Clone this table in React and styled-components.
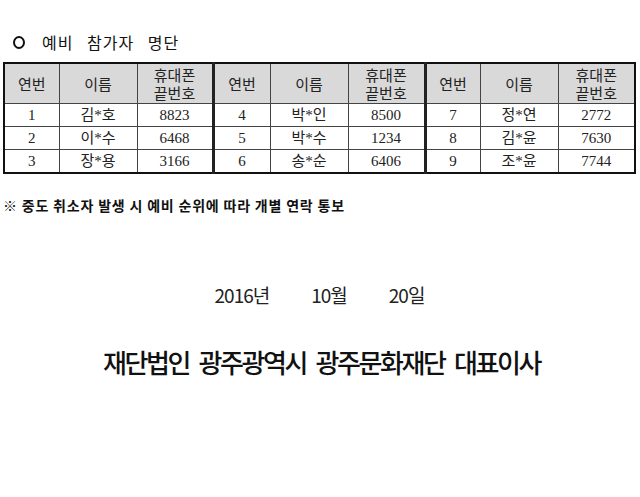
import React from "react";
import styled, { createGlobalStyle } from "styled-components";

const GlobalStyle = createGlobalStyle`
  html, body {
    margin: 0;
    padding: 0;
    background: #ffffff;
  }
  body {
    font-family: "Noto Sans CJK KR", "Noto Sans", sans-serif;
    color: #111;
  }
`;

const Page = styled.div`
  width: 640px;
  height: 497px;
  box-sizing: border-box;
  padding: 32px 6px 0 3px;
  display: flex;
  flex-direction: column;
`;

const Heading = styled.div`
  display: flex;
  align-items: center;
  height: 20px;
  padding-left: 10px;
  font-size: 16px;
  line-height: 20px;
  letter-spacing: 1px;
  word-spacing: 9px;
  color: #111;
`;

const Circle = styled.span`
  display: inline-block;
  width: 8px;
  height: 9px;
  border: 2px solid #111;
  border-radius: 50%;
  margin-right: 17px;
`;

const Table = styled.table`
  margin-top: 10px;
  width: 631px;
  border-collapse: collapse;
  table-layout: fixed;
  border: 2px solid #111;
  font-family: "Liberation Serif", "Noto Sans CJK KR", serif;
  font-size: 15px;
  color: #222;
`;

const Cell = styled.td`
  border: 1px solid #444;
  border-left: ${(p) => (p.$group ? "3px solid #222" : "1px solid #444")};
  text-align: center;
  padding: 0;
  height: 22px;
  line-height: 18px;
`;

const HeadCell = styled(Cell).attrs({ as: "th" })`
  background: #d9d9d9;
  font-weight: normal;
  font-family: "Noto Sans CJK KR", sans-serif;
  height: 39px;
  line-height: 18px;
`;

const Note = styled.div`
  margin-top: 21px;
  font-size: 14px;
  font-weight: 700;
  letter-spacing: 0.8px;
  color: #111;
`;

const DateLine = styled.div`
  margin-top: 66px;
  display: flex;
  justify-content: center;
  gap: 42px;
  font-family: "Liberation Sans Narrow", "Noto Sans CJK KR", sans-serif;
  font-size: 19px;
  letter-spacing: -1px;
  color: #222;
  padding-left: 2px;
`;

const Signer = styled.div`
  margin-top: 35px;
  text-align: center;
  font-size: 26px;
  font-weight: 500;
  letter-spacing: -2.4px;
  word-spacing: 6px;
  color: #111;
  padding-left: 6px;
`;

const widths = [55, 78, 76, 57, 78, 77, 55, 78, 77];

const rows = [
  ["1", "김*호", "8823", "4", "박*인", "8500", "7", "정*연", "2772"],
  ["2", "이*수", "6468", "5", "박*수", "1234", "8", "김*윤", "7630"],
  ["3", "장*용", "3166", "6", "송*순", "6406", "9", "조*윤", "7744"],
];

const HeaderGroup = ({ first }) => (
  <>
    <HeadCell $group={!first}>연번</HeadCell>
    <HeadCell>이름</HeadCell>
    <HeadCell>
      휴대폰
      <br />
      끝번호
    </HeadCell>
  </>
);

export default function App() {
  return (
    <Page>
      <GlobalStyle />
      <Heading>
        <Circle />
        예비 참가자 명단
      </Heading>
      <Table>
        <colgroup>
          {widths.map((w, i) => (
            <col key={i} style={{ width: w }} />
          ))}
        </colgroup>
        <thead>
          <tr>
            <HeaderGroup first />
            <HeaderGroup />
            <HeaderGroup />
          </tr>
        </thead>
        <tbody>
          {rows.map((r, ri) => (
            <tr key={ri}>
              {r.map((v, ci) => (
                <Cell key={ci} $group={ci === 3 || ci === 6}>
                  {v}
                </Cell>
              ))}
            </tr>
          ))}
        </tbody>
      </Table>
      <Note>※ 중도 취소자 발생 시 예비 순위에 따라 개별 연락 통보</Note>
      <DateLine>
        <span>2016년</span>
        <span>10월</span>
        <span>20일</span>
      </DateLine>
      <Signer>재단법인 광주광역시 광주문화재단 대표이사</Signer>
    </Page>
  );
}
